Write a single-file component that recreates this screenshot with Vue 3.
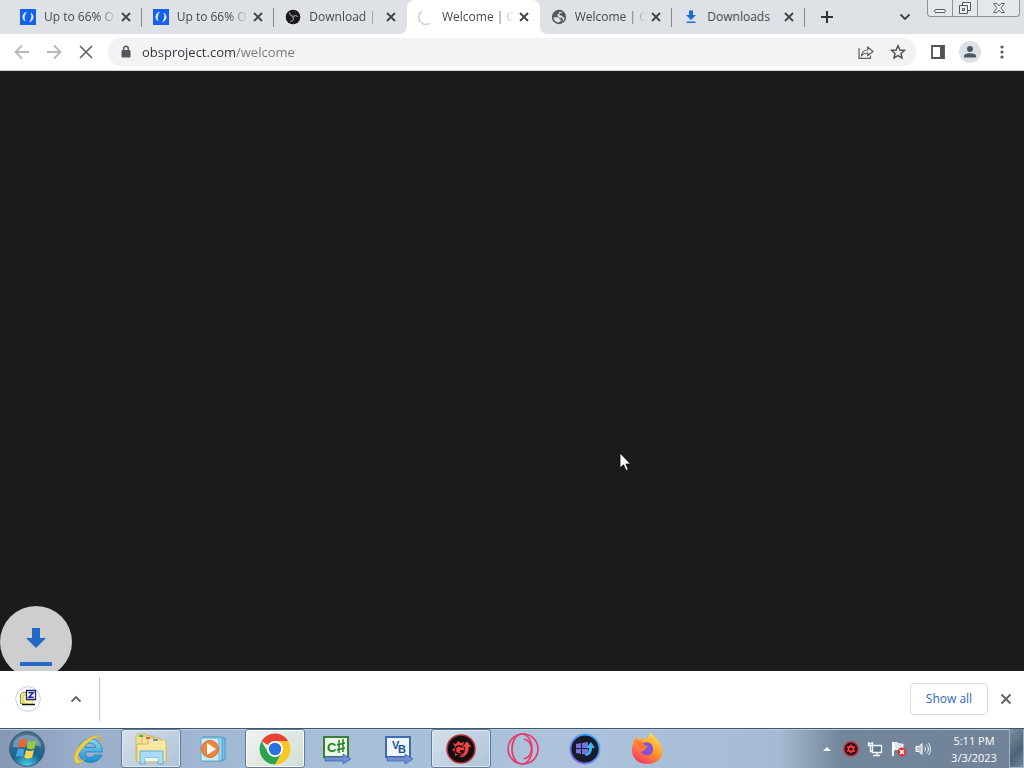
<script setup>
import { ref } from 'vue'

const tabs = [
  { id: 1, title: 'Up to 66% O', icon: 'opera', fade: true },
  { id: 2, title: 'Up to 66% O', icon: 'opera', fade: true },
  { id: 3, title: 'Download | O', icon: 'obs', fade: true },
  { id: 4, title: 'Welcome | O', icon: 'spinner', active: true, fade: true },
  { id: 5, title: 'Welcome | O', icon: 'globe', fade: true },
  { id: 6, title: 'Downloads', icon: 'download' },
]
const address = ref('obsproject.com/welcome')
const apps = [
  { id: 'ie', label: 'Internet Explorer' },
  { id: 'explorer', label: 'File Explorer', open: true },
  { id: 'media', label: 'Media Player' },
  { id: 'chrome', label: 'Chrome', open: true, current: true },
  { id: 'csharp', label: 'C# Express' },
  { id: 'vb', label: 'Visual Basic Express' },
  { id: 'booster', label: 'Driver Booster', open: true },
  { id: 'operagx', label: 'Opera GX' },
  { id: 'winup', label: 'Software Updater' },
  { id: 'firefox', label: 'Firefox' },
]
</script>

<template>
  <div class="desktop">
    <header class="strip">
      <nav class="tabs" aria-label="Tabs">
        <div v-for="t in tabs" :key="t.id" class="tab" :class="{ active: t.active }">
          <svg v-if="t.icon === 'opera'" class="fav" viewBox="0 0 16 16">
            <rect width="16" height="16" fill="#1460f2" />
            <path d="M6.500 3C1.600 4.500 2 10.500 5 12 4 8.600 4.600 5.500 6.500 3ZM9.500 13C14.400 11.500 14 5.500 11 4 12 7.400 11.400 10.500 9.500 13Z" fill="#e2f2ff" stroke="#e2f2ff" stroke-width=".4" />
          </svg>
          <svg v-else-if="t.icon === 'obs'" class="fav" viewBox="0 0 16 16">
            <circle cx="8" cy="8" r="7.300" fill="#18191c" />
            <g fill="none" stroke="#c4c6ca" stroke-width="1">
              <path d="M4.600 3.500C4.600 6 6 7.600 8.500 7" />
              <path d="M13 8C11.500 6 9 6.300 8.300 8.500" />
              <path d="M5.500 12.400C8.300 12 9.300 9.800 7.600 8" />
            </g>
          </svg>
          <svg v-else-if="t.icon === 'spinner'" class="fav" viewBox="0 0 16 16">
            <path d="M4 2.400A7 7 0 0 0 11.600 14.400" fill="none" stroke="#cfd0d3" stroke-width="1.500" />
          </svg>
          <svg v-else-if="t.icon === 'globe'" class="fav" viewBox="0 0 16 16">
            <circle cx="8" cy="8" r="7.200" fill="#55595d" />
            <path d="M2.500 8.300H6.300C8 8.300 8 10.400 9.800 10.400V12L7.500 13.600C4.600 13.300 2.600 11.200 2.500 8.300ZM8 3H10.800V4L8.600 4.300V6.500H10.900L12 8.600H13.600C13.400 10.800 12.300 12.200 11 13L12.200 10.700 10.700 8.800H8L6.500 6.800V5H8Z" fill="#dee1e6" />
          </svg>
          <svg v-else class="fav" viewBox="0 0 16 16">
            <path d="M6 1.500H10V6H13L8 11 3 6H6ZM3.500 12.500H12.500V14H3.500Z" fill="#1a6fd8" />
          </svg>
          <a class="title" :class="{ fade: t.fade }" href="#">{{ t.title }}</a>
          <button class="close" :aria-label="'Close ' + t.title">
            <svg width="10" height="10" viewBox="0 0 10 10"><path d="M1 1 9 9M9 1 1 9" fill="none" stroke="#3f4246" stroke-width="1.800" /></svg>
          </button>
        </div>
      </nav>
      <button class="new-tab" aria-label="New tab">
        <svg width="14" height="14" viewBox="0 0 14 14"><path d="M7 1V13M1 7H13" stroke="#2f3237" stroke-width="2" /></svg>
      </button>
      <button class="search-tabs" aria-label="Search tabs">
        <svg width="12" height="8" viewBox="0 0 12 8"><path d="M1.500 1.500 6 6 10.500 1.500" fill="none" stroke="#3b3e44" stroke-width="1.800" /></svg>
      </button>
      <div class="caption">
        <button aria-label="Minimize">
          <svg width="14" height="15" viewBox="0 0 14 15"><rect x="1.500" y="8.500" width="11" height="3" rx="1.500" fill="#f5f6f8" stroke="#5b6068" /></svg>
        </button>
        <button aria-label="Restore">
          <svg width="14" height="15" viewBox="0 0 14 15"><g fill="#f1f2f4" stroke="#53575e"><path d="M4.500 1.500H12.500V9.500H4.500Z" /><path d="M1.500 4.500H9.500V12.500H1.500Z" /><path d="M4.500 7.500H6.500V9.500H4.500Z" /></g></svg>
        </button>
        <button class="wide" aria-label="Close window">
          <svg width="14" height="15" viewBox="0 0 14 15"><path d="M1.500 2.500H5L7 5 9 2.500H12.500L9 7 12.500 11.500H9L7 9 5 11.500H1.500L5 7Z" fill="#f3f4f6" stroke="#63676e" /></svg>
        </button>
      </div>
    </header>

    <div class="toolbar">
      <button class="tool" aria-label="Back">
        <svg width="16" height="16" viewBox="0 0 16 16"><path d="M15 8H2M8 1.500 1.500 8 8 14.500" fill="none" stroke="#b6b8bb" stroke-width="1.800" /></svg>
      </button>
      <button class="tool" aria-label="Forward">
        <svg width="16" height="16" viewBox="0 0 16 16"><path d="M1 8H14M8 1.500 14.500 8 8 14.500" fill="none" stroke="#b6b8bb" stroke-width="1.800" /></svg>
      </button>
      <button class="tool" aria-label="Stop loading">
        <svg width="14" height="14" viewBox="0 0 14 14"><path d="M1 1 13 13M13 1 1 13" stroke="#5b5e62" stroke-width="1.600" /></svg>
      </button>
      <div class="omnibox">
        <svg class="lock" width="12" height="14" viewBox="0 0 12 14"><rect x="1.500" y="5" width="9" height="7.500" rx="1" fill="#54575b" /><path d="M3.700 6V3.500A2.300 2.300 0 0 1 8.300 3.500V6" fill="none" stroke="#54575b" stroke-width="1.400" /></svg>
        <input v-model="address" class="address" type="text" aria-label="Address" spellcheck="false" />
        <button class="tool" aria-label="Share">
          <svg width="16" height="16" viewBox="0 0 16 16"><path d="M1 4V14.300H12.500V11.500M3.500 11.500C4 8 6 6 9.700 6V3L15 7.500 9.700 11.500V9C7 9 5 9.800 3.500 11.500Z" fill="none" stroke="#5b5e62" stroke-width="1.200" /></svg>
        </button>
        <button class="tool" aria-label="Bookmark">
          <svg width="16" height="16" viewBox="0 0 16 16"><path d="M8 1.700 9.900 6 14.500 6.400 11 9.500 12 14 8 11.600 4 14 5 9.500 1.500 6.400 6.100 6Z" fill="none" stroke="#505357" stroke-width="1.500" /></svg>
        </button>
      </div>
      <button class="tool" aria-label="Side panel">
        <svg width="14" height="14" viewBox="0 0 14 14"><path d="M1 1H13V13H1Z" fill="#fff" stroke="#505357" stroke-width="1.800" /><path d="M9 1H13V13H9Z" fill="#505357" /></svg>
      </button>
      <button class="tool" aria-label="Profile">
        <svg width="22" height="22" viewBox="0 0 22 22"><circle cx="11" cy="11" r="11" fill="#dde1e6" /><circle cx="11" cy="8" r="3" fill="#4c5663" /><path d="M5 16.500V15C5 11.300 17 11.300 17 15V16.500Z" fill="#4c5663" /></svg>
      </button>
      <button class="tool" aria-label="Menu">
        <svg width="4" height="14" viewBox="0 0 4 14"><g fill="#55585c"><circle cx="2" cy="2" r="1.600" /><circle cx="2" cy="7" r="1.600" /><circle cx="2" cy="12" r="1.600" /></g></svg>
      </button>
    </div>

    <main class="page">
      <svg class="drop" viewBox="0 0 72 72"><circle cx="36" cy="36" r="36" fill="#cecece" /><path d="M32 22H40V32H46L36 42 26 32H32ZM20 56H52V60H20Z" fill="#2469c8" /></svg>
      <svg class="pointer" viewBox="0 0 12 20"><path d="M1 1V16L4.500 12.800 7 18.500 9.300 17.500 6.900 12H11.500Z" fill="#fff" stroke="#050505" stroke-width=".8" /></svg>
    </main>

    <footer class="shelf">
      <button class="file" aria-label="Open downloaded file">
        <svg width="26" height="26" viewBox="0 0 26 26"><circle cx="13" cy="13" r="12.300" fill="#fff" stroke="#bdd0e8" /><path d="M7 18.500H20" stroke="#111" stroke-width="1.500" /><path d="M5.500 8.500 7.500 6.500H11L12.500 8.500V17.500H5.500Z" fill="#eef08a" stroke="#8b8b45" /><path d="M8 9H18V17.500H8Z" fill="#f4f6a0" stroke="#a8a850" stroke-width=".6" /><path d="M11.500 4.500H20.500V13.500H11.500Z" fill="#fff" stroke="#22227a" stroke-width="1.300" /><path d="M13.500 6.700H18.200L13.800 11.300H18.700" fill="none" stroke="#25259d" stroke-width="1.500" /></svg>
      </button>
      <button class="more" aria-label="Download options">
        <svg width="12" height="8" viewBox="0 0 12 8"><path d="M1.500 6.500 6 2 10.500 6.500" fill="none" stroke="#606266" stroke-width="1.800" /></svg>
      </button>
      <span class="rule"></span>
      <button class="show-all">Show all</button>
      <button class="dismiss" aria-label="Close downloads bar">
        <svg width="12" height="12" viewBox="0 0 12 12"><path d="M1.500 1.500 10.500 10.500M10.500 1.500 1.500 10.500" stroke="#5d6064" stroke-width="1.800" /></svg>
      </button>
    </footer>

    <div class="taskbar">
      <svg width="0" height="0" class="defs" aria-hidden="true">
        <defs>
          <radialGradient id="orb" cx=".5" cy="1" r=".9"><stop offset="0" stop-color="#4cd5ec" /><stop offset=".5" stop-color="#17638f" /><stop offset="1" stop-color="#4b718f" /></radialGradient>
          <linearGradient id="fox" x1=".8" y1="0" x2=".2" y2="1"><stop offset="0" stop-color="#ffe745" /><stop offset=".5" stop-color="#ff942c" /><stop offset="1" stop-color="#f62f68" /></linearGradient>
          <linearGradient id="arrow" x1="0" y1="1" x2="1" y2="0"><stop offset="0" stop-color="#8a5cf0" /><stop offset="1" stop-color="#30bdf4" /></linearGradient>
          <linearGradient id="blue" x1="0" y1="0" x2="0" y2="1"><stop offset="0" stop-color="#95d7f4" /><stop offset="1" stop-color="#168bca" /></linearGradient>
        </defs>
      </svg>
      <button class="start" aria-label="Start">
        <svg width="36" height="36" viewBox="0 0 36 36"><circle cx="18" cy="18" r="17.300" fill="url(#orb)" stroke="#38566f" stroke-width="1" /><path d="M4 16C4 0 32 0 32 16 23 11 13 18 4 16Z" fill="#dcebf4" opacity=".35" /><path d="M11 9C13.500 7.500 16 7.500 18 9L16 17C13.500 15.500 11.500 15.500 9 17Z" fill="#ee652c" /><path d="M19.500 9.700C22 11 24.500 11 27.500 9.500L25.500 17.500C22.500 19 20 18.500 17.600 17.300Z" fill="#98cc40" /><path d="M8.500 18.500C11 17.200 13.200 17.200 15.600 18.600L13.700 26C11.500 24.500 9 24.500 6.500 26Z" fill="#42a4e3" /><path d="M17.200 19C19.600 20.300 22 20.400 25 19L23 26.500C20 28 17.500 27.800 15.200 26.500Z" fill="#ffd449" /></svg>
      </button>
      <div class="apps">
        <button v-for="a in apps" :key="a.id" class="app" :class="{ open: a.open, current: a.current }" :aria-label="a.label">
          <svg v-if="a.id === 'ie'" width="34" height="34" viewBox="0 0 34 34"><path d="M30.500 20H13C13.500 26 20 27 22.500 23H30C26 34 7 33 6.500 19 6.500 2 30.500 3 30.500 20ZM13 15.500H23.500C23 9.500 14 9.500 13 15.500Z" fill="url(#blue)" stroke="#1986bc" stroke-width=".8" /><path d="M29 13C33 2 25 1 14 8 4 15 1 25 3 30 5 33 10 30 13 27 7 30 5 29 6 24 8 16 24 2 28 5 30 6 30 9 29 13Z" fill="#f7cf36" stroke="#dba925" stroke-width=".5" /></svg>
          <svg v-else-if="a.id === 'explorer'" width="34" height="34" viewBox="0 0 34 34"><g stroke="#c9ad55" stroke-width=".8"><path d="M2 8V4L4 2H12L14 4H20V28H2Z" fill="#f3df91" /><path d="M8 10V5L10 4H17L19 6H26V29H8Z" fill="#f6e39b" /><path d="M3 12H14V7L16 6H24L26 8H32V30H3Z" fill="#fbe7a0" /></g><path d="M5 4H9" stroke="#4bb65e" stroke-width="2" /><path d="M12 6H16" stroke="#d96451" stroke-width="2" /><path d="M19 8H24" stroke="#5b91cc" stroke-width="2" /><path d="M6 19H29V32H24V26H11V32H6Z" fill="#a9dcf5" stroke="#5cb1d5" /><path d="M11 26H24V29H11Z" fill="#e5f7fd" /></svg>
          <svg v-else-if="a.id === 'media'" width="28" height="28" viewBox="0 0 28 28"><path d="M7 3H26V25H7Z" fill="#79c2e7" stroke="#409bc9" /><path d="M4 2H23V26H4Z" fill="#a6dcf5" stroke="#409bc9" /><path d="M2 3H20V26H2Z" fill="#c9ebf8" stroke="#64adcf" /><circle cx="11" cy="14" r="8.500" fill="#ef853b" stroke="#dd6928" /><path d="M8 8 17 14 8 20Z" fill="#fff" /></svg>
          <svg v-else-if="a.id === 'chrome'" width="32" height="32" viewBox="0 0 32 32"><path d="M16 16 2.600 8.250A15.500 15.500 0 0 1 29.400 8.250H16Z" fill="#e64235" /><path d="M16 8.250H29.400A15.500 15.500 0 0 1 16 31.500L22.700 19.900Z" fill="#fbc622" /><path d="M2.600 8.250A15.500 15.500 0 0 0 16 31.500L22.700 19.900 16 16 9.300 19.900Z" fill="#2ca44e" /><circle cx="16" cy="16" r="8" fill="#fff" /><circle cx="16" cy="16" r="6.200" fill="#2870df" /></svg>
          <svg v-else-if="a.id === 'csharp'" width="32" height="30" viewBox="0 0 32 30"><path d="M3 3H27V23H3Z" fill="#e9f5e5" stroke="#397f3b" stroke-width="2" /><path d="M4 23H22V20L30 25 22 30V27H4Z" fill="#718fd2" stroke="#335ba6" stroke-width=".7" /><text class="glyph" x="6" y="18" font-size="13" font-weight="700" fill="#23812c">C</text><path d="M18 6V19M22 5V18M16 11 24 9M16 16 24 14" stroke="#23812c" stroke-width="1.500" /></svg>
          <svg v-else-if="a.id === 'vb'" width="32" height="30" viewBox="0 0 32 30"><path d="M3 3H27V23H3Z" fill="#edf6ff" stroke="#426ab1" stroke-width="2" /><path d="M4 23H22V20L30 25 22 30V27H4Z" fill="#718fd2" stroke="#335ba6" stroke-width=".7" /><text class="glyph" x="9" y="15" font-size="11" font-weight="700" fill="#1f528f">V<tspan x="15" y="19">B</tspan></text></svg>
          <svg v-else-if="a.id === 'booster'" width="32" height="32" viewBox="0 0 32 32"><circle cx="16" cy="16" r="14" fill="#150d10" stroke="#b92d36" stroke-width="1.500" /><path d="M8 10 11 11 13 8 16 10 19 9 18 13 20 16 18 20 17 23 14 21 10 23 10 19 7 17 10 14Z" fill="#ee4043" /><path d="M17 14A4 4 0 1 0 18 18H15" fill="none" stroke="#341115" stroke-width="1.800" /><path d="M13 24C18 23 20 19 20 14H17L22 8 27 14H24C24 21 19 26 13 24Z" fill="#f54649" stroke="#150d10" stroke-width=".6" /></svg>
          <svg v-else-if="a.id === 'operagx'" width="34" height="34" viewBox="0 0 34 34"><g fill="none" stroke="#e93769" stroke-width="1.600"><circle cx="17" cy="17" r="15" /><ellipse cx="16" cy="17" rx="10" ry="15" /><path d="M18 7C28 10 28 24 18 27" /></g></svg>
          <svg v-else-if="a.id === 'winup'" width="32" height="32" viewBox="0 0 32 32"><circle cx="16" cy="16" r="14.500" fill="#171b2b" stroke="url(#arrow)" stroke-width="1.800" /><path d="M7 11 12 10V15H7ZM13 10 19 9V15H13ZM7 16H12V21L7 20ZM13 16H19V22L13 21Z" fill="#7770dd" /><path d="M17 23C22 22 23 18 23 15H26L22 9 17 15H20C20 18 19 20 16 22Z" fill="#38b8ef" /></svg>
          <svg v-else width="32" height="34" viewBox="0 0 32 34"><path d="M3 9 5 4 8 8C12 5 15 7 17 7 17 4 20 1 21 1 22 6 29 7 31 17 33 27 25 32 16 32 7 32 1 26 1 18 1 14 2 12 3 9Z" fill="url(#fox)" /><path d="M10 13C16 7 23 12 22 18 21 25 13 25 10 20L15 17Z" fill="#8751d4" /><path d="M4 9C8 8 12 10 13 13L17 14C15 17 12 16 11 19 8 17 7 13 4 9Z" fill="#ff7540" /></svg>
        </button>
      </div>
      <div class="tray">
        <button class="tray-icon" aria-label="Show hidden icons"><svg width="8" height="6" viewBox="0 0 8 6"><path d="M4 1 8 5H0Z" fill="#f7fafc" /></svg></button>
        <button class="tray-icon" aria-label="Driver Booster"><svg width="16" height="16" viewBox="0 0 16 16"><circle cx="8" cy="8" r="7" fill="#261217" stroke="#c22a35" stroke-width="1.500" /><circle cx="8" cy="8" r="2.500" fill="none" stroke="#f13c43" stroke-width="1.800" /><path d="M8 3.500V5M8 11V12.500M4 5.700 5.400 6.500M10.600 9.500 12 10.300M12 5.700 10.600 6.500M5.400 9.500 4 10.300" stroke="#f13c43" stroke-width="1.500" /></svg></button>
        <button class="tray-icon" aria-label="Network"><svg width="16" height="16" viewBox="0 0 16 16"><path d="M5.500 4.500H14.500V11.500H5.500ZM10 12V14M6 14.500H13" fill="#62778b" stroke="#f1f6fb" stroke-width="1.300" /><path d="M1.500 1V4.500H5.500V1M1.500 2.500H5.500M3.500 4.500V10.500H5" fill="none" stroke="#f1f6fb" stroke-width="1.300" /></svg></button>
        <button class="tray-icon" aria-label="Action center"><svg width="16" height="16" viewBox="0 0 16 16"><path d="M2 1V15" stroke="#fff" stroke-width="2" /><path d="M3 2C6 0 7 4 12 3V9C8 10 6 7 3 9Z" fill="#dce6ed" stroke="#fff" /><circle cx="11" cy="11" r="4.500" fill="#d63739" /><path d="M9 9 13 13M13 9 9 13" stroke="#fff" stroke-width="1.500" /></svg></button>
        <button class="tray-icon" aria-label="Volume"><svg width="16" height="16" viewBox="0 0 16 16"><path d="M1 5.500H4L7 2.500V13.500L4 10.500H1Z" fill="#b9c7d3" stroke="#fff" /><path d="M9.500 5.500C10.800 7 10.800 9 9.500 10.500M11.500 3.500C14 6 14 10 11.500 12.500M13.500 2C16 6 16 10 13.500 14" fill="none" stroke="#edf3f7" stroke-width="1" /></svg></button>
      </div>
      <div class="clock"><span>5:11 PM</span><span>3/3/2023</span></div>
      <button class="peek" aria-label="Show desktop"></button>
    </div>
  </div>
</template>

<style>
html, body { margin: 0; overflow: hidden; }
</style>

<style scoped>
.desktop { display: flex; flex-direction: column; height: 100vh; font: 12px/16px "Open Sans", "Noto Sans", sans-serif; color: #3c4043; }
button { display: flex; align-items: center; justify-content: center; flex: none; padding: 0; border: 0; background: none; font: inherit; color: inherit; box-sizing: border-box; }
svg { display: block; flex: none; }
.strip { display: flex; flex: none; height: 34px; padding-left: 9px; background: #dee1e6; }
.tabs { display: flex; flex: 0 1 796px; min-width: 0; }
.tab { position: relative; display: flex; flex: 1; align-items: center; min-width: 0; padding: 0 8px 0 11px; }
.tab::after { content: ""; position: absolute; right: 0; top: 8px; width: 1px; height: 19px; background: #85898f; }
.tab.active { background: #fff; border-radius: 8px 8px 0 0; }
.tab.active::after, .tab:has(+ .active)::after { background: transparent; }
.tab.active::before { content: ""; position: absolute; left: -8px; right: -8px; bottom: 0; height: 8px; background: radial-gradient(circle at 0 0, transparent 8px, #fff 8px) left / 8px 8px no-repeat, radial-gradient(circle at 100% 0, transparent 8px, #fff 8px) right / 8px 8px no-repeat; }
.fav { width: 16px; height: 16px; margin-right: 8px; }
.title { flex: 1; min-width: 0; white-space: nowrap; color: #45494e; text-decoration: none; }
.fade { mask-image: linear-gradient(90deg, #000 calc(100% - 20px), transparent calc(100% - 2px)); }
.close { width: 16px; height: 16px; }
.new-tab { width: 28px; margin-left: 8px; }
.search-tabs { width: 28px; margin-left: auto; }
.caption { display: flex; height: 17px; margin: 0 4px 0 8px; border: 1px solid #8d9299; border-top: 0; border-radius: 0 0 4px 4px; background: #e4e7eb; box-sizing: border-box; }
.caption button { width: 25px; border-right: 1px solid #8d9299; }
.caption .wide { width: 41px; border-right: 0; }
.toolbar { display: flex; flex: none; align-items: center; height: 36px; padding: 0 6px; background: #fff; border-bottom: 1px solid #d4d5d6; }
.tool { width: 32px; height: 28px; }
.omnibox { display: flex; flex: 1; align-items: center; height: 28px; min-width: 0; margin: 0 6px; padding: 0 2px 0 12px; border-radius: 14px; background: #f1f3f4; }
.address { flex: 1; min-width: 0; margin-left: 10px; padding: 0; border: 0; outline: 0; font: 13px/20px "Open Sans", "Noto Sans", sans-serif; color: #303338; background: linear-gradient(90deg, #303338 94px, #73777b 94px); background-clip: text; -webkit-text-fill-color: transparent; }
.page { position: relative; flex: 1; min-height: 0; overflow: hidden; background: #1b1b1b; }
.drop { position: absolute; left: 0; bottom: -7px; width: 72px; height: 72px; }
.pointer { position: absolute; left: 619px; top: 381px; width: 12px; height: 20px; }
.shelf { display: flex; flex: none; align-items: center; height: 57px; padding: 0 10px 2px 15px; background: #fff; box-sizing: border-box; }
.file { width: 26px; height: 26px; }
.more { width: 28px; height: 28px; margin-left: 21px; }
.rule { width: 1px; height: 44px; margin-left: 9px; background: #c6c9cd; }
.show-all { width: 78px; height: 32px; margin-left: auto; border: 1px solid #dadce0; border-radius: 4px; color: #2f66bd; font-weight: 500; }
.dismiss { width: 16px; height: 16px; margin-left: 10px; }
.taskbar { display: flex; flex: none; align-items: center; height: 40px; box-sizing: border-box; border-top: 1px solid #3c5771; background: linear-gradient(90deg, #8498b3 0, #9baecb 8%, #a5bdd7 30%, #adc3dc 55%, #a6bad3 76%, #72869c 82%, #718398 100%); box-shadow: inset 0 1px #bfcddd; }
.defs { position: absolute; }
.start { width: 54px; height: 39px; margin-right: 5px; }
.apps { display: flex; flex: 1; gap: 2px; min-width: 0; height: 39px; }
.app { width: 60px; height: 39px; }
.app.open { border: 1px solid #627b96; border-radius: 3px; background: linear-gradient(135deg, #d5e0ea, #afc3d8); box-shadow: inset 0 0 0 1px #dce8f2; }
.app.current { background: linear-gradient(135deg, #f0f3f1, #d0ded7); box-shadow: inset 0 0 0 1px #fff; }
.glyph { font-family: "Liberation Sans", sans-serif; }
.tray { display: flex; align-items: center; }
.tray-icon { width: 24px; height: 24px; }
.clock { display: flex; flex-direction: column; align-items: center; width: 70px; padding-left: 4px; color: #fff; font-size: 11px; line-height: 17px; }
.peek { width: 15px; height: 39px; border: 1px solid #a5b4c2; border-top: 0; background: linear-gradient(135deg, #7f91a3, #4d6277 60%, #71869a); }
</style>
